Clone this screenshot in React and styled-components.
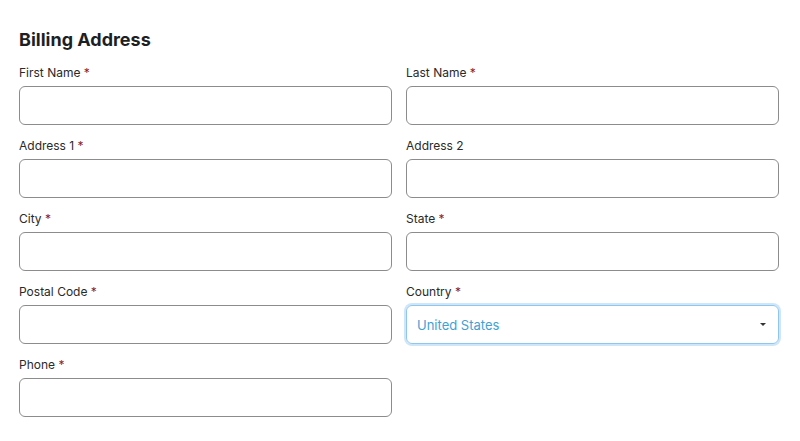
import React from "react";
import styled, { createGlobalStyle } from "styled-components";

const Global = createGlobalStyle`
  body { margin: 0; background: #fff; font-family: Inter, "Noto Sans", sans-serif; }
`;

const Page = styled.div`
  padding: 28px 21px 0 19px;
`;

const Title = styled.h2`
  margin: 0 0 14px;
  font-size: 18px;
  line-height: 23px;
  font-weight: 700;
  color: #1e1f24;
`;

const Grid = styled.div`
  display: grid;
  grid-template-columns: 373px 373px;
  column-gap: 14px;
  row-gap: 13px;
`;

const Field = styled.div`
  display: flex;
  flex-direction: column;
  gap: 5px;
`;

const Label = styled.label`
  font-size: 12px;
  line-height: 16px;
  color: #2a2a2a;
  span { color: #8a1c2b; }
`;

const Input = styled.div`
  height: 39px;
  box-sizing: border-box;
  border: 1px solid ${({ $focus }) => ($focus ? "#8fc6ee" : "#8c8c8c")};
  box-shadow: ${({ $focus }) => ($focus ? "0 0 0 2px #cfe6f8" : "none")};
  border-radius: 6px;
  display: flex;
  align-items: center;
  justify-content: space-between;
  padding: 0 12px 0 10px;
  font-size: 13px;
  color: #3fa1d4;
`;

const Caret = styled.span`
  width: 0;
  height: 0;
  border-left: 3px solid transparent;
  border-right: 3px solid transparent;
  border-top: 3px solid #333;
`;

const fields = [
  ["First Name", true], ["Last Name", true],
  ["Address 1", true], ["Address 2", false],
  ["City", true], ["State", true],
  ["Postal Code", true], ["Country", true, "United States"],
  ["Phone", true],
];

export default function App() {
  return (
    <Page>
      <Global />
      <Title>Billing Address</Title>
      <Grid>
        {fields.map(([name, req, value]) => (
          <Field key={name}>
            <Label>{name}{req && <span> *</span>}</Label>
            <Input $focus={!!value}>
              {value}
              {value && <Caret />}
            </Input>
          </Field>
        ))}
      </Grid>
    </Page>
  );
}
